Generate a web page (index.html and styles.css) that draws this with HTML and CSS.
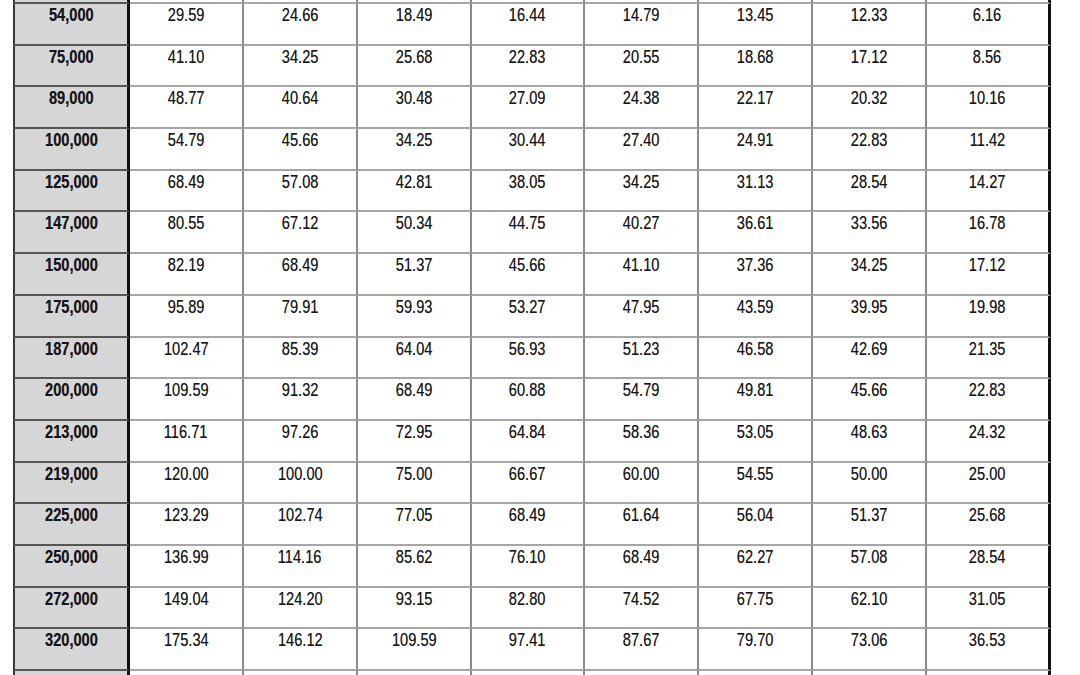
FILE: index.html
```html
<!DOCTYPE html>
<html>
<head>
<meta charset="utf-8">
<link rel="stylesheet" href="styles.css">
</head>
<body>
<div class="sheet">
  <div class="grid">
    <div class="cell key"></div><div class="cell"></div><div class="cell"></div><div class="cell"></div><div class="cell"></div><div class="cell"></div><div class="cell"></div><div class="cell"></div><div class="cell last"></div>

    <div class="cell key"><span>54,000</span></div><div class="cell"><span>29.59</span></div><div class="cell"><span>24.66</span></div><div class="cell"><span>18.49</span></div><div class="cell"><span>16.44</span></div><div class="cell"><span>14.79</span></div><div class="cell"><span>13.45</span></div><div class="cell"><span>12.33</span></div><div class="cell last"><span>6.16</span></div>

    <div class="cell key"><span>75,000</span></div><div class="cell"><span>41.10</span></div><div class="cell"><span>34.25</span></div><div class="cell"><span>25.68</span></div><div class="cell"><span>22.83</span></div><div class="cell"><span>20.55</span></div><div class="cell"><span>18.68</span></div><div class="cell"><span>17.12</span></div><div class="cell last"><span>8.56</span></div>

    <div class="cell key"><span>89,000</span></div><div class="cell"><span>48.77</span></div><div class="cell"><span>40.64</span></div><div class="cell"><span>30.48</span></div><div class="cell"><span>27.09</span></div><div class="cell"><span>24.38</span></div><div class="cell"><span>22.17</span></div><div class="cell"><span>20.32</span></div><div class="cell last"><span>10.16</span></div>

    <div class="cell key"><span>100,000</span></div><div class="cell"><span>54.79</span></div><div class="cell"><span>45.66</span></div><div class="cell"><span>34.25</span></div><div class="cell"><span>30.44</span></div><div class="cell"><span>27.40</span></div><div class="cell"><span>24.91</span></div><div class="cell"><span>22.83</span></div><div class="cell last"><span>11.42</span></div>

    <div class="cell key"><span>125,000</span></div><div class="cell"><span>68.49</span></div><div class="cell"><span>57.08</span></div><div class="cell"><span>42.81</span></div><div class="cell"><span>38.05</span></div><div class="cell"><span>34.25</span></div><div class="cell"><span>31.13</span></div><div class="cell"><span>28.54</span></div><div class="cell last"><span>14.27</span></div>

    <div class="cell key"><span>147,000</span></div><div class="cell"><span>80.55</span></div><div class="cell"><span>67.12</span></div><div class="cell"><span>50.34</span></div><div class="cell"><span>44.75</span></div><div class="cell"><span>40.27</span></div><div class="cell"><span>36.61</span></div><div class="cell"><span>33.56</span></div><div class="cell last"><span>16.78</span></div>

    <div class="cell key"><span>150,000</span></div><div class="cell"><span>82.19</span></div><div class="cell"><span>68.49</span></div><div class="cell"><span>51.37</span></div><div class="cell"><span>45.66</span></div><div class="cell"><span>41.10</span></div><div class="cell"><span>37.36</span></div><div class="cell"><span>34.25</span></div><div class="cell last"><span>17.12</span></div>

    <div class="cell key"><span>175,000</span></div><div class="cell"><span>95.89</span></div><div class="cell"><span>79.91</span></div><div class="cell"><span>59.93</span></div><div class="cell"><span>53.27</span></div><div class="cell"><span>47.95</span></div><div class="cell"><span>43.59</span></div><div class="cell"><span>39.95</span></div><div class="cell last"><span>19.98</span></div>

    <div class="cell key"><span>187,000</span></div><div class="cell"><span>102.47</span></div><div class="cell"><span>85.39</span></div><div class="cell"><span>64.04</span></div><div class="cell"><span>56.93</span></div><div class="cell"><span>51.23</span></div><div class="cell"><span>46.58</span></div><div class="cell"><span>42.69</span></div><div class="cell last"><span>21.35</span></div>

    <div class="cell key"><span>200,000</span></div><div class="cell"><span>109.59</span></div><div class="cell"><span>91.32</span></div><div class="cell"><span>68.49</span></div><div class="cell"><span>60.88</span></div><div class="cell"><span>54.79</span></div><div class="cell"><span>49.81</span></div><div class="cell"><span>45.66</span></div><div class="cell last"><span>22.83</span></div>

    <div class="cell key"><span>213,000</span></div><div class="cell"><span>116.71</span></div><div class="cell"><span>97.26</span></div><div class="cell"><span>72.95</span></div><div class="cell"><span>64.84</span></div><div class="cell"><span>58.36</span></div><div class="cell"><span>53.05</span></div><div class="cell"><span>48.63</span></div><div class="cell last"><span>24.32</span></div>

    <div class="cell key"><span>219,000</span></div><div class="cell"><span>120.00</span></div><div class="cell"><span>100.00</span></div><div class="cell"><span>75.00</span></div><div class="cell"><span>66.67</span></div><div class="cell"><span>60.00</span></div><div class="cell"><span>54.55</span></div><div class="cell"><span>50.00</span></div><div class="cell last"><span>25.00</span></div>

    <div class="cell key"><span>225,000</span></div><div class="cell"><span>123.29</span></div><div class="cell"><span>102.74</span></div><div class="cell"><span>77.05</span></div><div class="cell"><span>68.49</span></div><div class="cell"><span>61.64</span></div><div class="cell"><span>56.04</span></div><div class="cell"><span>51.37</span></div><div class="cell last"><span>25.68</span></div>

    <div class="cell key"><span>250,000</span></div><div class="cell"><span>136.99</span></div><div class="cell"><span>114.16</span></div><div class="cell"><span>85.62</span></div><div class="cell"><span>76.10</span></div><div class="cell"><span>68.49</span></div><div class="cell"><span>62.27</span></div><div class="cell"><span>57.08</span></div><div class="cell last"><span>28.54</span></div>

    <div class="cell key"><span>272,000</span></div><div class="cell"><span>149.04</span></div><div class="cell"><span>124.20</span></div><div class="cell"><span>93.15</span></div><div class="cell"><span>82.80</span></div><div class="cell"><span>74.52</span></div><div class="cell"><span>67.75</span></div><div class="cell"><span>62.10</span></div><div class="cell last"><span>31.05</span></div>

    <div class="cell key"><span>320,000</span></div><div class="cell"><span>175.34</span></div><div class="cell"><span>146.12</span></div><div class="cell"><span>109.59</span></div><div class="cell"><span>97.41</span></div><div class="cell"><span>87.67</span></div><div class="cell"><span>79.70</span></div><div class="cell"><span>73.06</span></div><div class="cell last"><span>36.53</span></div>

    <div class="cell key"></div><div class="cell"></div><div class="cell"></div><div class="cell"></div><div class="cell"></div><div class="cell"></div><div class="cell"></div><div class="cell"></div><div class="cell last"></div>
  </div>
</div>
</body>
</html>
```
FILE: styles.css
```css
html, body {
  margin: 0;
  padding: 0;
  background: #ffffff;
  overflow: hidden;
}
.sheet {
  width: 1080px;
  height: 675px;
  overflow: hidden;
  padding-left: 13px;
  box-sizing: border-box;
}
.grid {
  display: grid;
  grid-template-columns: 117px 114px 114px 114px 113px 114px 114px 114px 124px;
  grid-template-rows: 4px repeat(16, 41.69px) 12px;
  font-family: "Liberation Sans", Arial, sans-serif;
  font-size: 18.5px;
  line-height: 18px;
  color: #161616;
}
.cell {
  box-sizing: border-box;
  border-bottom: 2px solid #a6a6a6;
  border-right: 2px solid #8a8a8a;
  text-align: center;
  padding-top: 2px;
  overflow: hidden;
}
.cell span {
  display: inline-block;
  transform: scaleX(0.79);
  text-shadow: 0 0 0.6px rgba(0, 0, 0, 0.5);
}
.cell.key {
  background: #d6d6d6;
  border-left: 2px solid #3a3a3a;
  border-right: 3px solid #111111;
  border-bottom-color: #555555;
  font-weight: bold;
}
.cell.last {
  border-right: 3px solid #111111;
}
```
